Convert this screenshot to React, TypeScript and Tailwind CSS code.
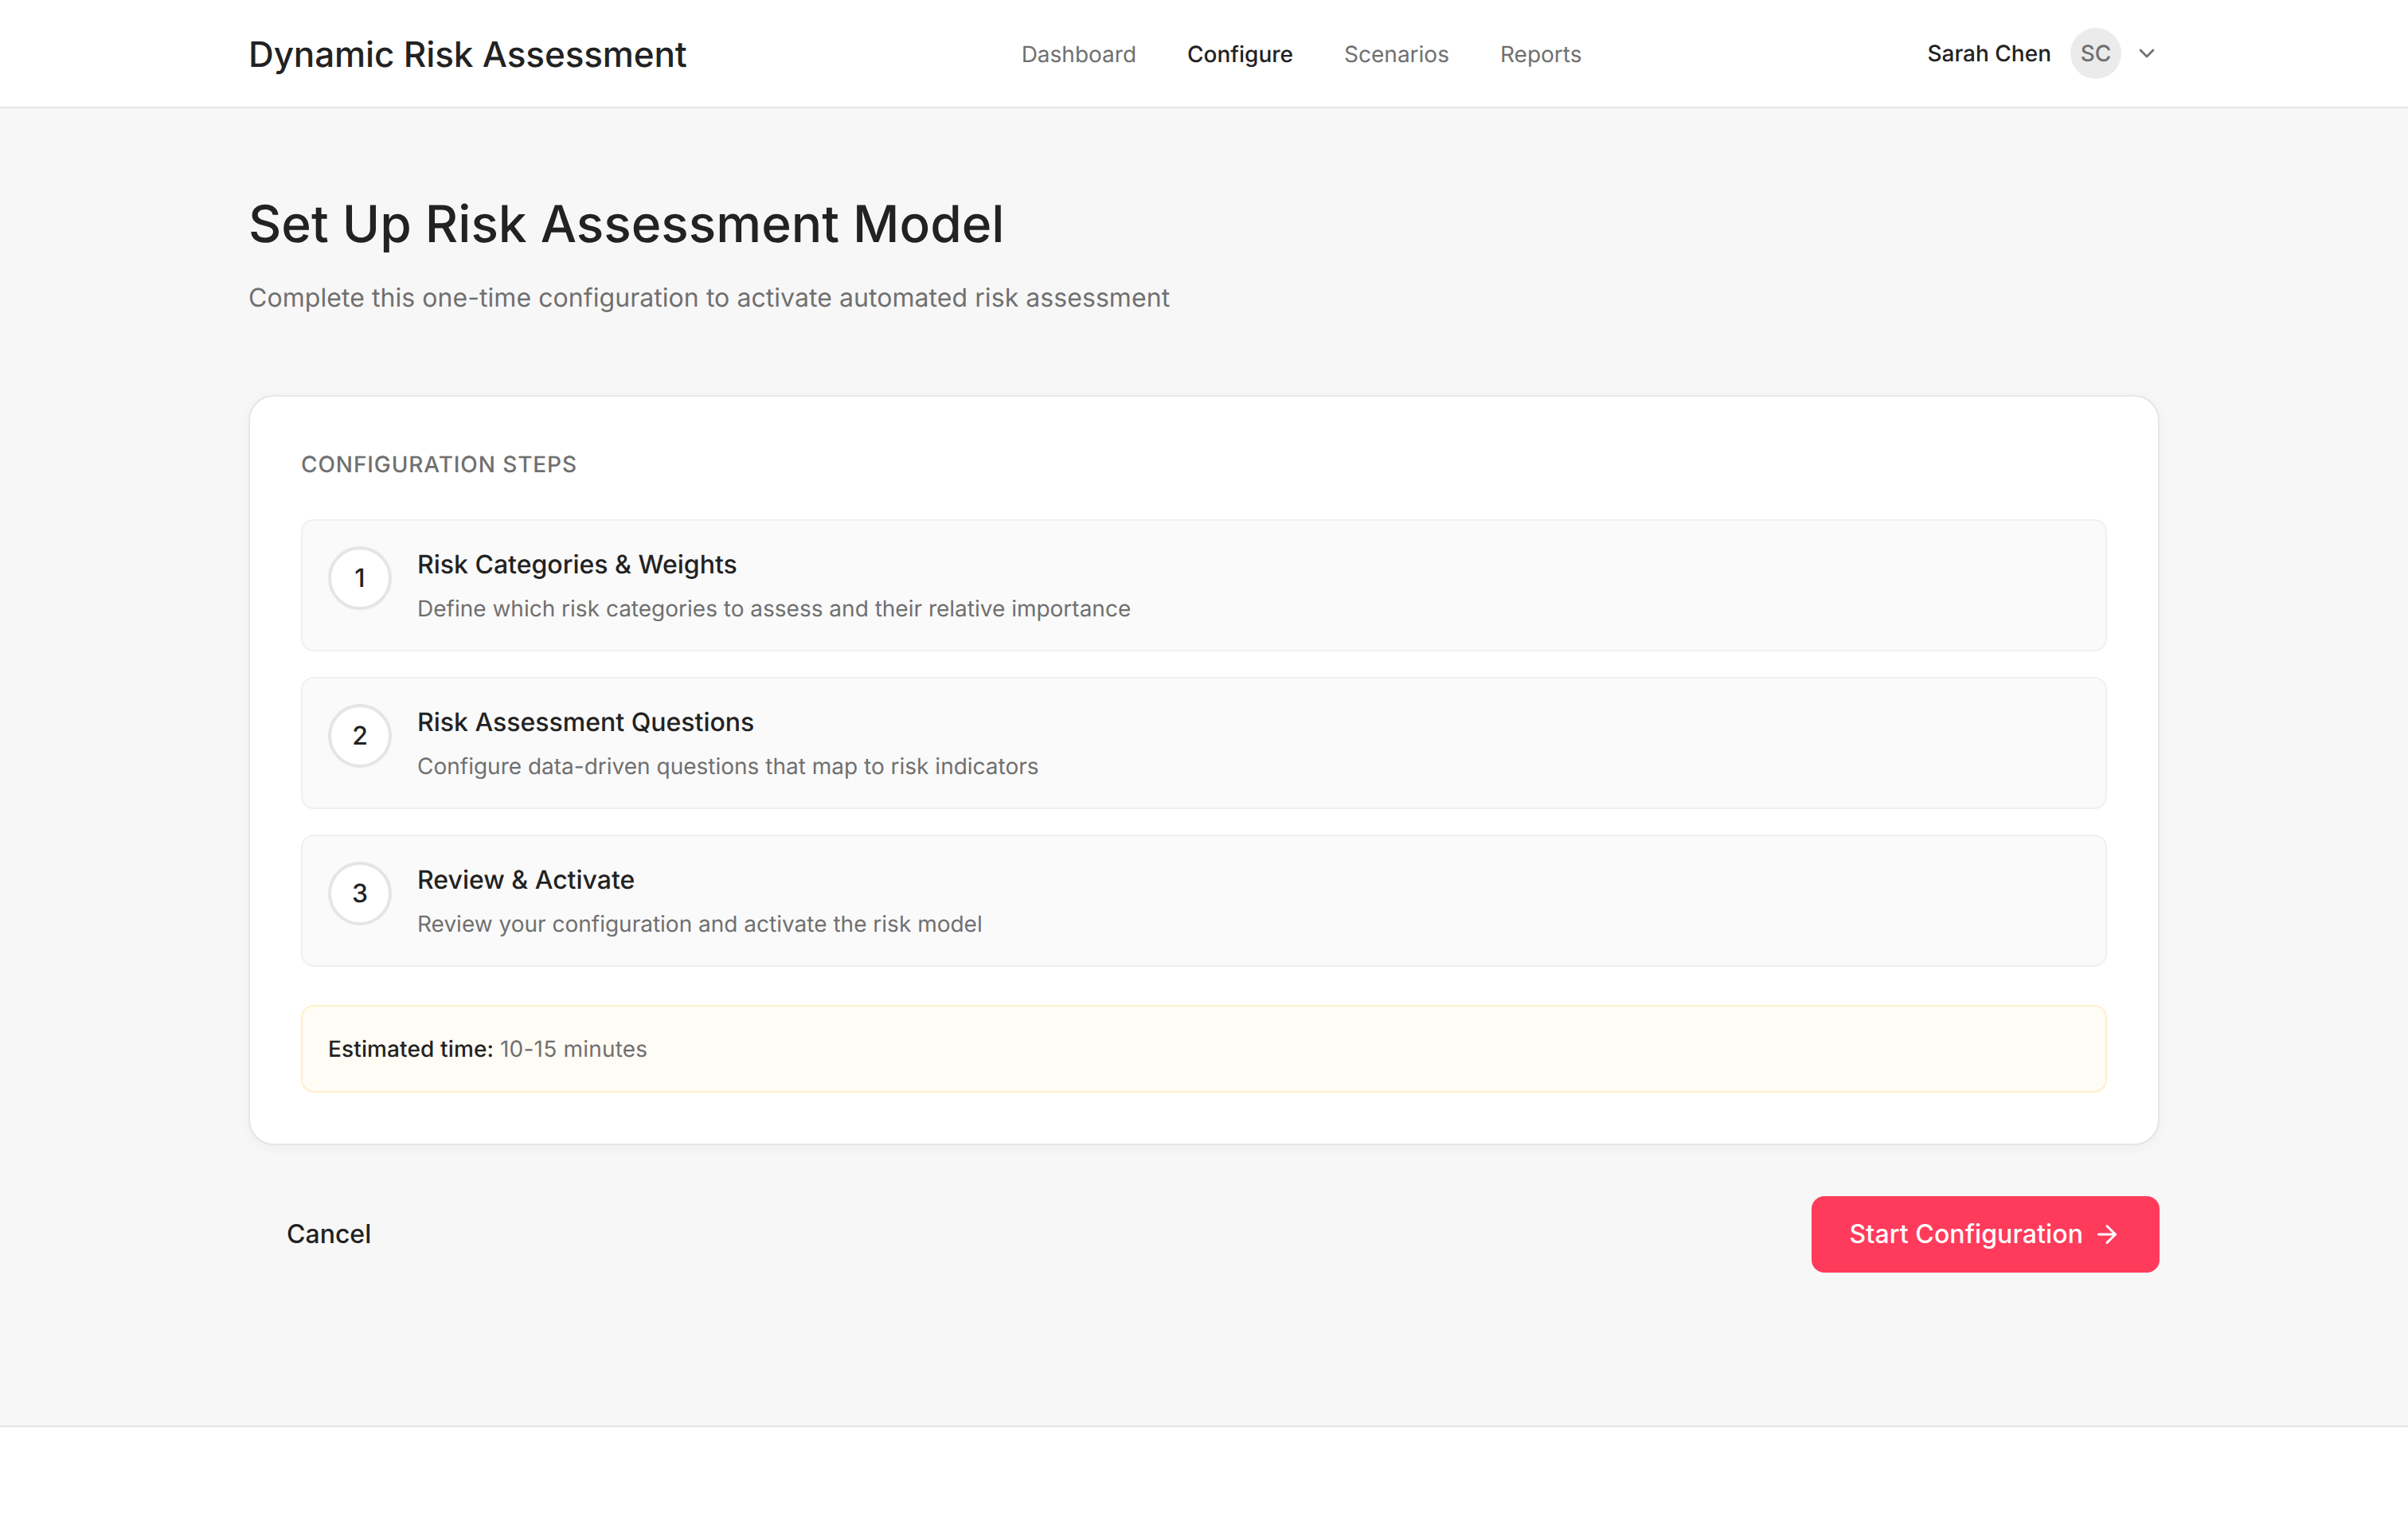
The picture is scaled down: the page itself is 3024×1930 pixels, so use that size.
import { ArrowRight, ChevronDown } from 'lucide-react';

const navItems = ['Dashboard', 'Configure', 'Scenarios', 'Reports'];

const steps = [
  { n: 1, title: 'Risk Categories & Weights', text: 'Define which risk categories to assess and their relative importance' },
  { n: 2, title: 'Risk Assessment Questions', text: 'Configure data-driven questions that map to risk indicators' },
  { n: 3, title: 'Review & Activate', text: 'Review your configuration and activate the risk model' },
];

export default function App() {
  return (
    <div className="min-h-screen flex flex-col bg-white font-['Inter',sans-serif] text-[#222222] antialiased [text-rendering:geometricPrecision]">
      <header className="h-[136px] border-b-2 border-[#e5e5e5] bg-white">
        <div className="w-[2400px] h-full mx-auto flex items-center justify-between">
          <div className="pt-0.5 text-[44px] font-medium tracking-[-0.12px] leading-normal">Dynamic Risk Assessment</div>
          <nav className="flex gap-16 mr-[14px] pt-px">
            {navItems.map((item) => (
              <a key={item} className={item === 'Configure' ? 'text-[28px] font-medium' : 'text-[28px] text-[#707070]'}>
                {item}
              </a>
            ))}
          </nav>
          <div className="flex items-center">
            <span className="text-[28px] font-medium">Sarah Chen</span>
            <div className="ml-6 mr-4 w-16 h-16 rounded-full bg-[#ebebeb] flex items-center justify-center text-[28px] font-medium text-[#707070]">SC</div>
            <ChevronDown className="w-8 h-8 text-[#707070]" />
          </div>
        </div>
      </header>

      <main className="flex-1 bg-[#f7f7f7] pt-24">
        <div className="w-[2400px] mx-auto">
          <h1 className="pt-0.5 text-[64px] font-medium leading-normal mb-5">Set Up Risk Assessment Model</h1>
          <p className="text-[32px] tracking-[0.06px] leading-normal text-[#707070] mb-[98px]">Complete this one-time configuration to activate automated risk assessment</p>

          <section className="bg-white border-2 border-[#e5e5e5] rounded-[32px] p-16 shadow-[0_4px_16px_rgba(0,0,0,0.04)]">
            <h2 className="text-[28px] font-medium tracking-[0.9px] text-[#707070] leading-normal mb-12">CONFIGURATION STEPS</h2>
            <div className="flex flex-col gap-8">
              {steps.map((s) => (
                <div key={s.n} className="flex gap-8 p-8 bg-[#fafafa] border-2 border-[#f0f0f0] rounded-2xl">
                  <div className="w-20 h-20 shrink-0 rounded-full bg-white border-4 border-[#e5e5e5] flex items-center justify-center text-[32px] font-medium">{s.n}</div>
                  <div>
                    <div className="text-[32px] font-medium leading-[46px] mb-3">{s.title}</div>
                    <div className="text-[28px] text-[#707070] leading-10">{s.text}</div>
                  </div>
                </div>
              ))}
            </div>
            <div className="mt-12 p-8 bg-[#fffbf5] border-2 border-[#fef0c7] rounded-2xl text-[28px] leading-normal text-[#707070]">
              <strong className="font-medium tracking-[0.13px] text-[#222222]">Estimated time:</strong> <span className="tracking-[0.2px]">10-15 minutes</span>
            </div>
          </section>

          <div className="mt-16 flex items-center justify-between">
            <button className="h-24 px-12 text-[32px] font-medium">Cancel</button>
            <button className="h-24 px-12 rounded-2xl bg-[#ff3b5c] text-white text-[32px] font-medium tracking-[0.1px] flex items-center gap-3">
              Start Configuration
              <ArrowRight className="w-9 h-9" />
            </button>
          </div>
        </div>
      </main>

      <footer className="h-[140px] border-t-2 border-[#e5e5e5] bg-white" />
    </div>
  );
}
